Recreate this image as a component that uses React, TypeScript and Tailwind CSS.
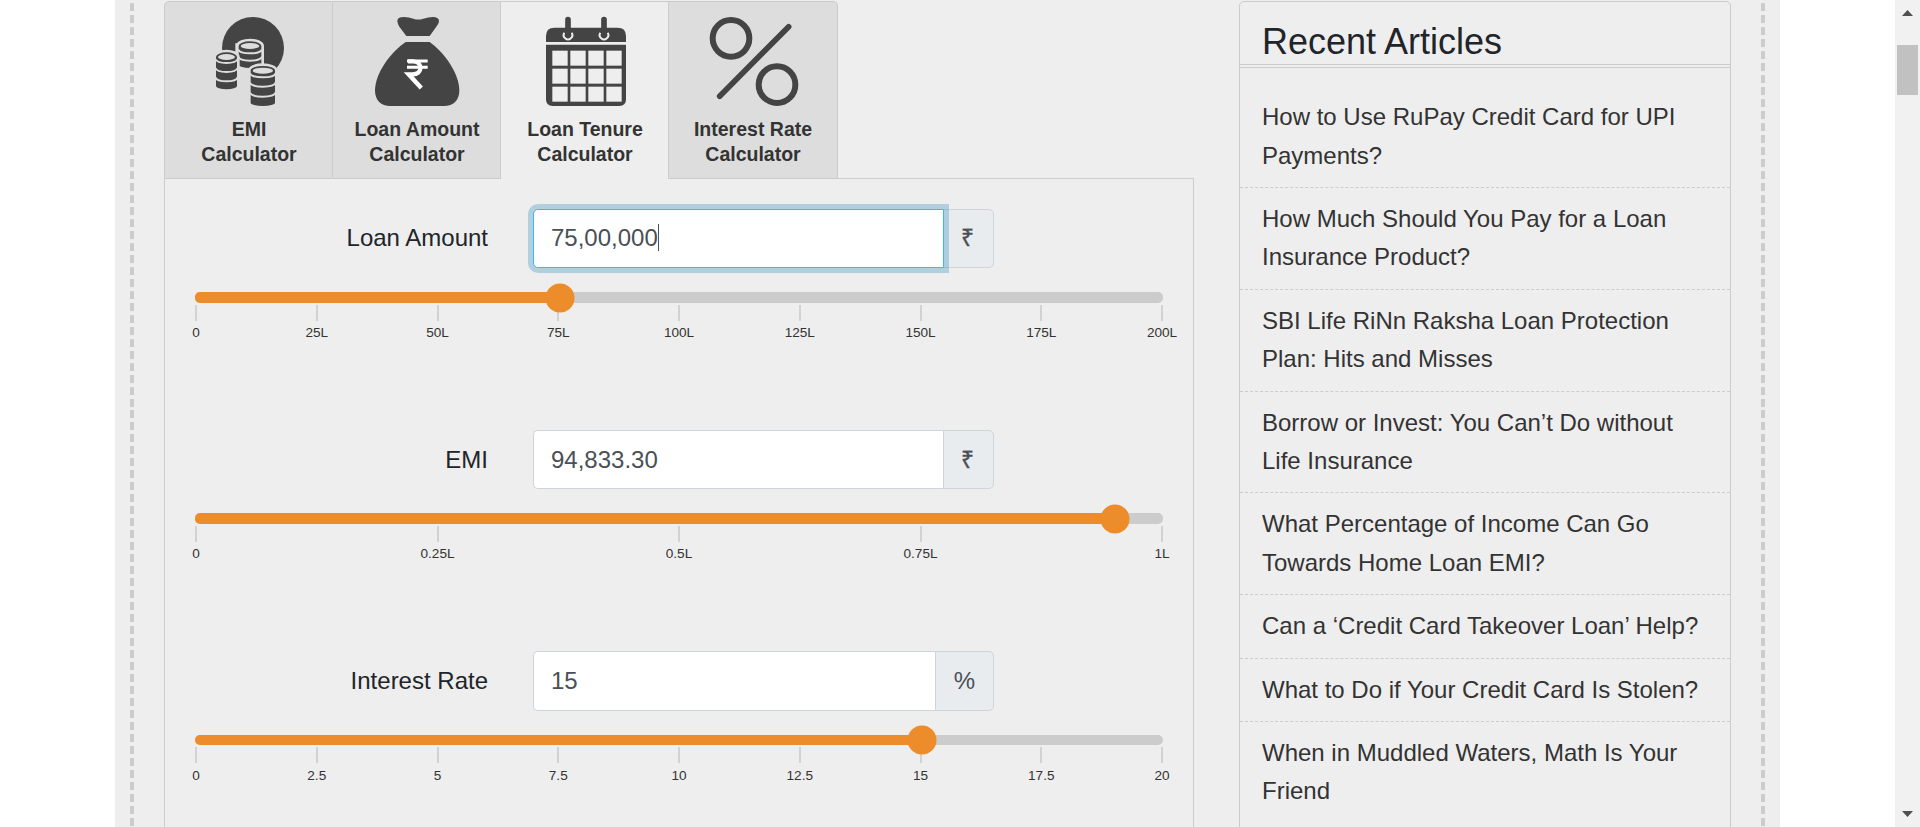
import type { ReactNode } from "react";

const INK = "#444";

function CoinStack({ x, w, top, bottom, seams }: { x: number; w: number; top: number; bottom: number; seams: number[] }) {
  const r = w / 2;
  const body = `M${x} ${top}a${r} 14 0 0 1 ${w} 0V${bottom - 10}a${r} 10 0 0 1 ${-w} 0z`;
  return (
    <g>
      <path d={body} fill="#ddd" stroke="#ddd" strokeWidth="16" />
      <path d={body} fill={INK} />
      <ellipse cx={x + r} cy={top} rx={r - 6} ry="9" fill="#ddd" />
      {seams.map((y) => (
        <path
          key={y}
          d={`M${x - 2} ${y - 13}C${x + 4} ${y + 3} ${x + w - 4} ${y + 3} ${x + w + 2} ${y - 13}`}
          fill="none"
          stroke="#ddd"
          strokeWidth="6"
        />
      ))}
    </g>
  );
}

function CoinsIcon() {
  return (
    <svg viewBox="312 51 267 267" className="size-[89px] overflow-visible">
      <circle cx="459" cy="144" r="93" fill={INK} />
      <path d="M406 130h81v110h-81zM340 165h72v80h-72z" fill="#ddd" />
      <CoinStack x={416} w={68} top={138} bottom={204} seams={[161, 183]} />
      <CoinStack x={348} w={63} top={171} bottom={268} seams={[190, 217, 245]} />
      <CoinStack x={452} w={73} top={212} bottom={318} seams={[233, 261, 291]} />
    </svg>
  );
}

function BagIcon() {
  return (
    <svg viewBox="816 51 267 267" className="size-[89px] overflow-visible">
      <path
        d="M892 64q-1 -13 20 -13q14 0 28 5q14 5 30 0q16 -5 28 -5q20 0 19 14q-2 8 -8 15l-20 28h-70l-21 -28q-5 -8 -6 -16z"
        fill={INK}
      />
      <path
        d="M917 126h72c40 28 89 92 89 146c0 28 -18 46 -46 46H871c-28 0 -46 -18 -46 -46c0 -54 50 -118 92 -146z"
        fill={INK}
      />
      <path d="M921 183h62M921 202h62" stroke="#fff" strokeWidth="9" />
      <path
        d="M924 184h14c31 0 31 39 0 39h-12l38 41"
        fill="none"
        stroke="#fff"
        strokeWidth="13"
      />
    </svg>
  );
}

function CalendarIcon() {
  return (
    <svg viewBox="150 51 267 267" className="size-[89px] overflow-visible">
      <path d="M168 126v-18q0 -25 25 -25h190q25 0 25 25v18z" fill={INK} />
      <path d="M168 134h240v164q0 20 -20 20H188q-20 0 -20 -20z" fill={INK} />
      {[234, 342].map((x) => (
        <g key={x}>
          <path
            d={`M${x - 11} 98a13 13 0 1 0 22 0`}
            fill="none"
            stroke="#eee"
            strokeWidth="6"
          />
          <path d={`M${x} 59V105`} stroke={INK} strokeWidth="17" strokeLinecap="round" />
        </g>
      ))}
      {[152, 206, 260].map((y) =>
        [187, 241, 295, 349].map((x) => (
          <rect key={`${x}-${y}`} x={x} y={y} width="46" height="45" fill="#eee" />
        )),
      )}
    </svg>
  );
}

function PercentIcon() {
  return (
    <svg viewBox="653 51 267 267" className="size-[89px] overflow-visible">
      <g fill="none" stroke={INK} strokeWidth="18">
        <circle cx="722" cy="115" r="55" />
        <circle cx="860" cy="254" r="55" />
        <path d="M688 289L895 80" strokeLinecap="round" strokeWidth="17" />
      </g>
    </svg>
  );
}

function Tab({ icon, title, className }: { icon: ReactNode; title: string; className: string }) {
  return (
    <div
      className={`flex h-[178px] shrink-0 flex-col items-center border-t border-r border-[#ccc] pt-[15px] ${className}`}
    >
      {icon}
      <div className="mt-[11px] pl-px text-center text-[19.5px] leading-[25px] font-bold text-[#333]">
        {title}
        <br />
        Calculator
      </div>
    </div>
  );
}

type FieldProps = {
  label: string;
  value: string;
  unit: string;
  unitWidth: string;
  fill: number;
  marks: string[];
  focused?: boolean;
  boxHeight?: string;
  barHeight?: string;
  markGap?: string;
};

function Field({
  label,
  value,
  unit,
  unitWidth,
  fill,
  marks,
  focused = false,
  boxHeight = "h-[59px]",
  barHeight = "h-[11px]",
  markGap = "mt-[4px]",
}: FieldProps) {
  return (
    <div className="h-[221px]">
      <div className={`flex items-center gap-[45px] text-2xl ${boxHeight}`}>
        <div className={`w-[293px] text-right text-[#212529] ${focused ? "pb-[2px]" : ""}`}>{label}</div>
        <div className="flex h-full w-[461px] text-[#495057]">
          <div
            className={`flex flex-1 items-center rounded-l-[5px] border bg-white pl-[17px] ${
              focused
                ? "relative z-10 -mr-px border-[#33bbff] pb-[2px] shadow-[0_0_0_5px_rgba(0,114,170,0.25)]"
                : "border-r-0 border-[#ced4da]"
            }`}
          >
            {value}
            {focused && <span className="h-[27px] w-px bg-[#495057]" />}
          </div>
          <div
            className={`flex items-center justify-center rounded-r-[5px] border border-[#ced4da] bg-[#e9ecef] ${unitWidth} ${focused ? "pb-[2px]" : ""}`}
          >
            <span className={unit === "₹" ? "-translate-x-px scale-x-95 [-webkit-text-stroke:0.4px_#495057]" : ""}>
              {unit}
            </span>
          </div>
        </div>
      </div>
      <div className={`relative mt-6 w-[968px] rounded-[5px] bg-[#ccc] ${barHeight}`}>
        <div className="h-full rounded-l-[5px] bg-[#ed8c2b]" style={{ width: fill }} />
        <div
          className="absolute top-1/2 z-10 size-[29px] -translate-1/2 rounded-full bg-[#ed8c2b]"
          style={{ left: fill }}
        />
      </div>
      <div className="mt-[2px] ml-px flex w-[966px] justify-between">
        {marks.map((m) => (
          <div key={m} className="flex w-0 flex-col items-center">
            <div className="h-4 w-[2px] bg-[#d2d2d2]" />
            <div className={`text-[13.6px] leading-[16px] whitespace-nowrap text-[#333] ${markGap}`}>{m}</div>
          </div>
        ))}
      </div>
    </div>
  );
}

const articles = [
  "How to Use RuPay Credit Card for UPI Payments?",
  "How Much Should You Pay for a Loan Insurance Product?",
  "SBI Life RiNn Raksha Loan Protection Plan: Hits and Misses",
  "Borrow or Invest: You Can’t Do without Life Insurance",
  "What Percentage of Income Can Go Towards Home Loan EMI?",
  "Can a ‘Credit Card Takeover Loan’ Help?",
  "What to Do if Your Credit Card Is Stolen?",
  "When in Muddled Waters, Math Is Your Friend",
];

function DashedRule() {
  return (
    <div className="mt-[3px] w-1 shrink-0 bg-[repeating-linear-gradient(to_bottom,#ccc_0,#ccc_8px,transparent_8px,transparent_11.985px)]" />
  );
}

export default function App() {
  return (
    <div className="flex h-[827px] w-[1920px] justify-between overflow-hidden bg-white pl-[115px] font-['Liberation_Sans',Arial,sans-serif]">
      <main className="flex h-full w-[1665px] justify-between bg-[#eee] px-[15px]">
        <DashedRule />
        <section className="ml-[30px] flex w-[1030px] shrink-0 flex-col pt-px">
          <div className="flex">
            <Tab icon={<CoinsIcon />} title="EMI" className="w-[169px] rounded-tl-[5px] border-b border-l bg-[#ddd]" />
            <Tab icon={<BagIcon />} title="Loan Amount" className="w-[168px] border-b bg-[#ddd]" />
            <Tab icon={<CalendarIcon />} title="Loan Tenure" className="w-[168px]" />
            <Tab
              icon={<PercentIcon />}
              title="Interest Rate"
              className="w-[169px] rounded-tr-[5px] border-b bg-[#ddd] pr-px"
            />
            <div className="flex-1 border-b border-[#ccc]" />
          </div>
          <div className="flex-1 border-x border-[#ccc] pt-[30px] pl-[30px]">
            <Field
              label="Loan Amount"
              value="75,00,000"
              unit="₹"
              unitWidth="w-[51px]"
              fill={364.5}
              marks={["0", "25L", "50L", "75L", "100L", "125L", "150L", "175L", "200L"]}
              focused
            />
            <Field
              label="EMI"
              value="94,833.30"
              unit="₹"
              unitWidth="w-[51px]"
              fill={920}
              marks={["0", "0.25L", "0.5L", "0.75L", "1L"]}
            />
            <Field
              label="Interest Rate"
              value="15"
              unit="%"
              unitWidth="w-[59px]"
              fill={727}
              marks={["0", "2.5", "5", "7.5", "10", "12.5", "15", "17.5", "20"]}
              boxHeight="h-[60px]"
              barHeight="h-[10px]"
              markGap="mt-[5px]"
            />
          </div>
        </section>
        <aside className="mt-px mr-[30px] ml-[45px] h-[840px] w-[492px] shrink-0 rounded-t-[5px] border border-[#ccc]">
          <h2 className="h-[66px] border-b-4 border-double border-[#ccc] pt-[18px] pl-[22px] text-4xl leading-[43px] text-[#212529]">
            Recent Articles
          </h2>
          <ul className="mt-[18.2px]">
            {articles.map((a) => (
              <li
                key={a}
                className="border-b border-dashed border-[#ccc] px-[22px] py-3 text-2xl leading-[38.4px] text-[#333] last:border-b-0"
              >
                {a}
              </li>
            ))}
          </ul>
        </aside>
        <DashedRule />
      </main>
      <div className="flex w-[25px] flex-col items-center justify-between bg-[#f1f1f1] pt-[10px] pb-[10px]">
        <div className="flex flex-col items-center gap-[29px]">
          <svg width="11" height="6" viewBox="0 0 11 6" className="fill-[#505050]">
            <path d="M5.5 0L11 6H0z" />
          </svg>
          <div className="h-[50px] w-[21px] bg-[#c1c1c1]" />
        </div>
        <svg width="11" height="6" viewBox="0 0 11 6" className="fill-[#505050]">
          <path d="M0 0H11L5.5 6z" />
        </svg>
      </div>
    </div>
  );
}
